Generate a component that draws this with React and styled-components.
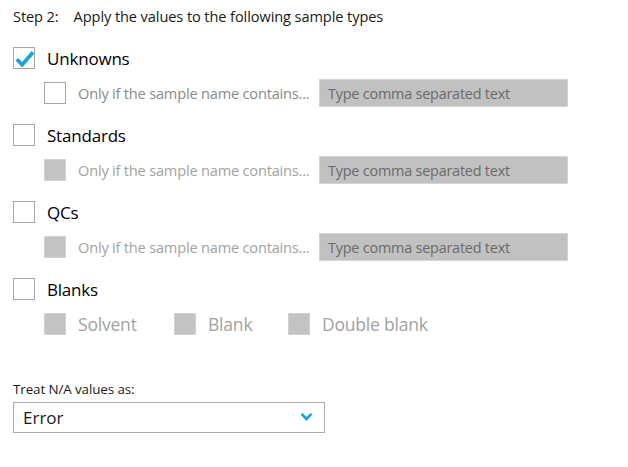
import React from "react";
import styled, { createGlobalStyle } from "styled-components";

const Global = createGlobalStyle`
  html, body { margin: 0; padding: 0; background: #fff; }
  body { font-family: "Open Sans", "Noto Sans", "Liberation Sans", sans-serif; }
`;

const Page = styled.div`
  width: 628px;
  height: 467px;
  padding: 6px 0 0 13px;
  box-sizing: border-box;
  background: #fff;
`;

const Title = styled.div`
  height: 20px;
  line-height: 20px;
  font-size: 14.6px;
  color: #1a1a1a;
  letter-spacing: -0.1px;
  span { margin-right: 15px; }
`;

const Groups = styled.div`
  margin-top: 20px;
  display: flex;
  flex-direction: column;
  gap: 16px;
`;

const Group = styled.div`
  display: flex;
  flex-direction: column;
  gap: 9px;
`;

const MainRow = styled.div`
  height: 24px;
  display: flex;
  align-items: center;
  gap: 12px;
`;

const SubRow = styled.div`
  height: 28px;
  margin-left: 31px;
  display: flex;
  align-items: center;
`;

const Box = styled.div`
  position: relative;
  flex: none;
  width: 22px;
  height: 22px;
  box-sizing: border-box;
  border: 1px solid ${(p) => (p.$disabled ? "#d2d2d2" : "#a6a6a6")};
  background: ${(p) => (p.$disabled ? "#c3c3c3" : "#fff")};
`;

const Check = styled.svg`
  position: absolute;
  left: 0;
  top: 0;
`;

const MainLabel = styled.div`
  font-size: 17px;
  color: #000;
  letter-spacing: -0.2px;
`;

const SubLabel = styled.div`
  width: 241px;
  margin-left: 12px;
  font-size: 14.6px;
  color: ${(p) => (p.$muted ? "#a2a2a2" : "#8a8a8a")};
  letter-spacing: -0.2px;
  white-space: nowrap;
`;

const TextInput = styled.div`
  width: 249px;
  height: 28px;
  box-sizing: border-box;
  border: 1px solid #d4d4d4;
  background: #c1c1c1;
  padding-left: 8px;
  display: flex;
  align-items: center;
  font-size: 14.4px;
  color: #6a6a6a;
  letter-spacing: -0.2px;
`;

const Option = styled.div`
  width: ${(p) => p.$w}px;
  display: flex;
  align-items: center;
  gap: 12px;
  font-size: 17.5px;
  color: #a2a2a2;
  letter-spacing: -0.2px;
`;

const NaLabel = styled.div`
  margin-top: 42px;
  font-size: 13.4px;
  color: #1a1a1a;
  letter-spacing: -0.1px;
  line-height: 18px;
`;

const Select = styled.div`
  margin-top: 4px;
  width: 312px;
  height: 31px;
  box-sizing: border-box;
  border: 1px solid #adadad;
  display: flex;
  align-items: center;
  justify-content: space-between;
  padding: 0 11px 0 9px;
  font-size: 17px;
  color: #1a1a1a;
`;

function CheckBox({ checked, disabled }) {
  return (
    <Box $disabled={disabled}>
      {checked && (
        <Check width="22" height="22" viewBox="0 0 22 22">
          <path d="M2.8 11.2 L8.2 16.8 L19 4.2" fill="none" stroke="#1aa3dc" strokeWidth="3.8" />
        </Check>
      )}
    </Box>
  );
}

function Sub({ enabled }) {
  return (
    <SubRow>
      <CheckBox disabled={!enabled} />
      <SubLabel $muted={!enabled}>Only if the sample name contains...</SubLabel>
      <TextInput>Type comma separated text</TextInput>
    </SubRow>
  );
}

export default function App() {
  return (
    <Page>
      <Global />
      <Title>
        <span>Step 2:</span>Apply the values to the following sample types
      </Title>
      <Groups>
        <Group>
          <MainRow>
            <CheckBox checked />
            <MainLabel>Unknowns</MainLabel>
          </MainRow>
          <Sub enabled />
        </Group>
        <Group>
          <MainRow>
            <CheckBox />
            <MainLabel>Standards</MainLabel>
          </MainRow>
          <Sub />
        </Group>
        <Group>
          <MainRow>
            <CheckBox />
            <MainLabel>QCs</MainLabel>
          </MainRow>
          <Sub />
        </Group>
        <Group>
          <MainRow>
            <CheckBox />
            <MainLabel>Blanks</MainLabel>
          </MainRow>
          <SubRow>
            <Option $w={130}>
              <CheckBox disabled />
              Solvent
            </Option>
            <Option $w={114}>
              <CheckBox disabled />
              Blank
            </Option>
            <Option $w={150}>
              <CheckBox disabled />
              Double blank
            </Option>
          </SubRow>
        </Group>
      </Groups>
      <NaLabel>Treat N/A values as:</NaLabel>
      <Select>
        Error
        <svg width="13" height="9" viewBox="0 0 13 9">
          <path d="M0.5 1.5 L2.5 0 L6.5 4 L10.5 0 L12.5 1.5 L6.5 8 Z" fill="#1aa3dc" />
        </svg>
      </Select>
    </Page>
  );
}
